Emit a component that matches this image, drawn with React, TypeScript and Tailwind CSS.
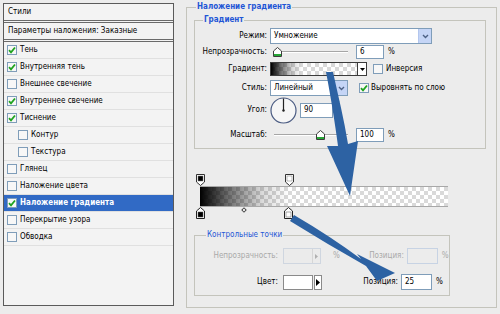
import type { ReactNode } from 'react'

const styles = [
  { label: 'Тень', on: true },
  { label: 'Внутренняя тень', on: true },
  { label: 'Внешнее свечение' },
  { label: 'Внутреннее свечение', on: true },
  { label: 'Тиснение', on: true },
  { label: 'Контур', sub: true },
  { label: 'Текстура', sub: true },
  { label: 'Глянец' },
  { label: 'Наложение цвета' },
  { label: 'Наложение градиента', on: true, active: true },
  { label: 'Перекрытие узора' },
  { label: 'Обводка' },
]

function Check({ on }: { on?: boolean }) {
  return (
    <span className="w-[10px] h-[10px] shrink-0 border border-[#7f9db9] bg-[#f7f7f7] flex items-center justify-center">
      {on && (
        <svg width="8" height="8" viewBox="0 0 8 8">
          <path d="M1 4.2 L3 6.3 L7 1.5" stroke="#1fa31f" strokeWidth="1.8" fill="none" />
        </svg>
      )}
    </span>
  )
}

function Select({ value, className }: { value: string; className: string }) {
  return (
    <div className={`${className} h-[16px] border border-[#7f9db9] bg-white flex items-center`}>
      <span className="flex-1 pl-[3px]">{value}</span>
      <span className="w-[13px] h-full bg-[#c5d5f6] border-l border-[#b3c6ee] flex items-center justify-center">
        <svg width="7" height="5" viewBox="0 0 7 5">
          <path d="M1 1 L3.5 3.5 L6 1" stroke="#4d6185" strokeWidth="1.4" fill="none" />
        </svg>
      </span>
    </div>
  )
}

function Thumb() {
  return (
    <svg width="9" height="10" viewBox="0 0 9 10">
      <path d="M0.5 4 L4.5 0.5 L8.5 4 V9.5 H0.5 Z" fill="#fff" stroke="#3d3d3d" />
      <rect x="1" y="7" width="7" height="2" fill="#27a836" />
    </svg>
  )
}

function Slider({ at }: { at: number }) {
  return (
    <div className="relative w-[80px] h-[14px]">
      <div className="absolute left-[4px] right-[2px] top-[6px] h-[2px] border-t border-[#a6a6a6] border-b border-b-white" />
      <div className="absolute top-[2px]" style={{ left: at }}>
        <Thumb />
      </div>
    </div>
  )
}

function Field({ value, className }: { value?: string; className: string }) {
  return (
    <div className={`${className} border border-[#7f9db9] bg-white flex items-center pl-[3px]`}>
      {value}
    </div>
  )
}

function Row({ label, className, children }: { label: string; className: string; children: ReactNode }) {
  return (
    <div className={`${className} flex items-center`}>
      <span className="w-[72px] text-right shrink-0">{label}</span>
      <div className="ml-[3px] flex items-center">{children}</div>
    </div>
  )
}

function Checker({ className }: { className: string }) {
  return (
    <div className={`${className} bg-white bg-[conic-gradient(#d9d9d9_25%,#fff_0_50%,#d9d9d9_0_75%,#fff_0)] bg-size-[8px_8px]`}>
      <div className="w-full h-full bg-[linear-gradient(to_right,#000_0%,rgba(0,0,0,0.55)_12%,rgba(0,0,0,0.15)_25%,transparent_36%)]" />
    </div>
  )
}

function TopStop({ fill }: { fill: string }) {
  return (
    <svg width="9" height="12" viewBox="0 0 9 12">
      <path d="M0.5 0.5 H8.5 V8 L4.5 11.5 L0.5 8 Z" fill="#fff" stroke="#333" />
      <rect x="2" y="2" width="5" height="5" fill={fill} stroke="#777" strokeWidth="0.5" />
    </svg>
  )
}

function BottomStop({ fill }: { fill: string }) {
  return (
    <svg width="9" height="12" viewBox="0 0 9 12">
      <path d="M0.5 11.5 H8.5 V4 L4.5 0.5 L0.5 4 Z" fill="#fff" stroke="#222" />
      <rect x="2" y="5" width="5" height="5" fill={fill} stroke="#555" strokeWidth="0.5" />
    </svg>
  )
}

export default function App() {
  return (
    <div className="relative w-[500px] h-[314px] overflow-hidden bg-[#ececec] flex items-start text-[8px] leading-none text-black font-['DejaVu_Sans_Condensed','Liberation_Sans',sans-serif]">
      {/* список стилей */}
      <div className="ml-[3px] mt-[3px] w-[171px] h-[303px] shrink-0 border border-[#5a5a5a] bg-[#f3f3f3] flex flex-col">
        <div className="h-[19px] px-[4px] flex items-center border-b-[3px] border-double border-[#6a6a6a]">Стили</div>
        <div className="h-[19px] px-[4px] flex items-center border-b-[3px] border-double border-[#6a6a6a]">
          Параметры наложения: Заказные
        </div>
        {styles.map((s) => (
          <div
            key={s.label}
            className={`h-[17px] flex items-center gap-[3px] border-b border-[#e0e0e0] ${s.sub ? 'pl-[14px]' : 'pl-[3px]'} ${
              s.active ? 'bg-[#316ac5] text-white font-bold' : ''
            }`}
          >
            <Check on={s.on} />
            <span>{s.label}</span>
          </div>
        ))}
      </div>

      {/* наложение градиента */}
      <fieldset className="ml-[12px] mt-[2px] w-[311px] h-[306px] shrink-0 border border-[#c4c4bc]">
        <legend className="ml-[9px] px-[1px] leading-[10px] font-bold text-[#1f56d6]">Наложение градиента</legend>

        <fieldset className="ml-[7px] mt-[3px] w-[292px] h-[134px] border border-[#c4c4bc]">
          <legend className="ml-[8px] px-[1px] leading-[10px] font-bold text-[#1f56d6]">Градиент</legend>

          <Row label="Режим:" className="h-[16px] mt-[3px]">
            <Select value="Умножение" className="w-[162px]" />
          </Row>
          <Row label="Непрозрачность:" className="h-[14px] mt-[1px]">
            <Slider at={3} />
            <Field value="6" className="ml-[6px] w-[28px] h-[14px]" />
            <span className="ml-[4px]">%</span>
          </Row>
          <Row label="Градиент:" className="h-[14px] mt-[3px]">
            <div className="w-[97px] h-[14px] border border-[#3c3c3c] flex">
              <Checker className="flex-1 h-full" />
              <span className="w-[9px] h-full bg-white border-l border-[#3c3c3c] flex items-center justify-center">
                <svg width="5" height="3" viewBox="0 0 5 3">
                  <path d="M0 0 H5 L2.5 3 Z" fill="#000" />
                </svg>
              </span>
            </div>
            <span className="ml-[6px]">
              <Check />
            </span>
            <span className="ml-[3px]">Инверсия</span>
          </Row>
          <Row label="Стиль:" className="h-[16px] mt-[4px]">
            <Select value="Линейный" className="w-[78px]" />
            <span className="ml-[11px]">
              <Check on />
            </span>
            <span className="ml-[2px]">Выровнять по слою</span>
          </Row>
          <Row label="Угол:" className="h-[26px] mt-[1px]">
            <svg width="27" height="27" viewBox="0 0 27 27">
              <circle cx="13.5" cy="13.5" r="12.5" fill="#f6f6f6" stroke="#4a5b82" strokeWidth="1.2" />
              <line x1="13.5" y1="13.5" x2="13.5" y2="1.5" stroke="#222" strokeWidth="1.2" />
              <circle cx="13.5" cy="13.5" r="1.2" fill="#222" />
            </svg>
            <Field value="90" className="ml-[3px] w-[33px] h-[15px]" />
            <span className="ml-[3px] self-start mt-[4px]">°</span>
          </Row>
          <Row label="Масштаб:" className="h-[14px] mt-[5px]">
            <Slider at={46} />
            <Field value="100" className="ml-[6px] w-[28px] h-[14px]" />
            <span className="ml-[4px]">%</span>
          </Row>
        </fieldset>

        {/* редактор градиента */}
        <div className="relative ml-[13px] mt-[25px] w-[248px] h-[12px]">
          <div className="absolute left-[-4px] top-0">
            <TopStop fill="#000" />
          </div>
          <div className="absolute left-[85px] top-0">
            <TopStop fill="#fff" />
          </div>
        </div>
        <Checker className="ml-[13px] w-[248px] h-[21px] border-y border-[#a8a8a8]" />
        <div className="relative ml-[13px] w-[248px] h-[12px]">
          <div className="absolute left-[-4px] top-0">
            <BottomStop fill="#000" />
          </div>
          <div className="absolute left-[42px] top-[1px] w-[4px] h-[4px] rotate-45 border border-[#444] bg-white" />
          <div className="absolute left-[84px] top-0">
            <BottomStop fill="#fff" />
          </div>
        </div>

        <fieldset className="ml-[7px] mt-[11px] w-[255px] h-[66px] border border-[#c4c4bc]">
          <legend className="ml-[11px] px-[1px] leading-[10px] text-[#1f56d6]">Контрольные точки</legend>
          <div className="h-[16px] mt-[8px] flex items-center text-[#a9a9a9]">
            <span className="w-[83px] text-right">Непрозрачность:</span>
            <div className="ml-[5px] w-[38px] h-[16px] border border-[#cfd6e0] bg-[#ebebeb] flex justify-end">
              <span className="w-[8px] h-full border-l border-[#d6d6d6] flex items-center justify-center">
                <svg width="3" height="5" viewBox="0 0 3 5">
                  <path d="M0 0 L3 2.5 L0 5 Z" fill="#b0b0b0" />
                </svg>
              </span>
            </div>
            <span className="ml-[12px]">%</span>
            <span className="ml-[12px] w-[52px] text-right">Позиция:</span>
            <div className="ml-[3px] w-[31px] h-[16px] border border-[#c7d3e4] bg-[#ececec]" />
            <span className="ml-[4px]">%</span>
          </div>
          <div className="h-[16px] mt-[10px] flex items-center">
            <span className="w-[83px] text-right">Цвет:</span>
            <div className="ml-[5px] w-[30px] h-[15px] border border-[#8a8a8a] bg-white" />
            <span className="ml-[1px] w-[8px] h-[15px] border border-[#8a8a8a] bg-white flex items-center justify-center">
              <svg width="4" height="7" viewBox="0 0 4 7">
                <path d="M0 0 L4 3.5 L0 7 Z" fill="#000" />
              </svg>
            </span>
            <span className="w-[76px] text-right">Позиция:</span>
            <Field value="25" className="ml-[3px] w-[31px] h-[16px]" />
            <span className="ml-[4px]">%</span>
          </div>
        </fieldset>
      </fieldset>

      {/* стрелки */}
      <svg className="absolute inset-0 pointer-events-none" width="500" height="314" viewBox="0 0 500 314">
        <path
          d="M326 72 C331 98 335 124 338 146 L327 146 L350 196 L358 141 L348 144 C344 119 338 95 333 72 Z"
          fill="#2d62a3"
        />
        <path
          d="M294 215 Q330 236 361 259 L357 254 L395 273 L377 281 L366 266 Q327 244 290 221 Z"
          fill="#2d62a3"
        />
      </svg>
    </div>
  )
}
